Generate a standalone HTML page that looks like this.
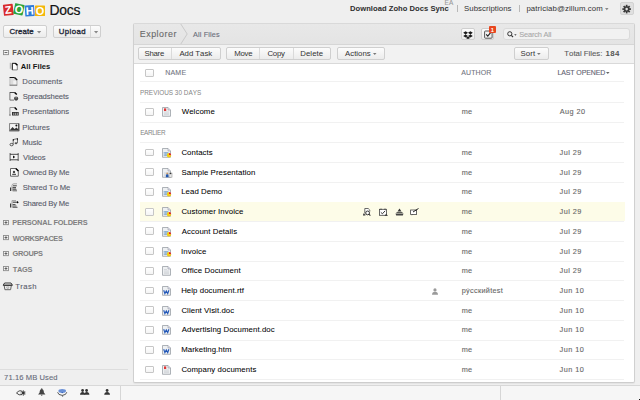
<!DOCTYPE html>
<html><head><meta charset="utf-8"><style>
html,body{margin:0;padding:0}
body{width:640px;height:400px;position:relative;overflow:hidden;background:#efefef;font-family:"Liberation Sans", sans-serif}
.t{position:absolute;white-space:nowrap;font-kerning:none;-webkit-text-stroke:0.1px currentColor}
.b{-webkit-text-stroke:0}
svg{overflow:visible}
</style></head><body>
<svg style="position:absolute;left:0px;top:0px" width="48" height="20" viewBox="0 0 48 20"><g transform="translate(8.3 9.8) rotate(-6)"><rect x="-4.9" y="-5.6" width="9.8" height="11.2" rx="0.6" fill="#d92b2b"/><text x="0" y="3.96" font-family="Liberation Sans" font-weight="bold" font-size="11" fill="#fff" text-anchor="middle">Z</text></g><g transform="translate(18.9 9.3) rotate(12)"><rect x="-4.8" y="-5.4" width="9.6" height="10.8" rx="0.6" fill="#2ba33a"/><text x="0" y="3.96" font-family="Liberation Sans" font-weight="bold" font-size="11" fill="#fff" text-anchor="middle">O</text></g><g transform="translate(29.7 10.8) rotate(-4)"><rect x="-4.7" y="-5.5" width="9.4" height="11.0" rx="0.6" fill="#2f7bd8"/><text x="0" y="3.96" font-family="Liberation Sans" font-weight="bold" font-size="11" fill="#fff" text-anchor="middle">H</text></g><g transform="translate(40.0 10.7) rotate(0)"><rect x="-5.0" y="-5.3" width="10.0" height="10.6" rx="0.6" fill="#f4b70c"/><text x="0" y="3.96" font-family="Liberation Sans" font-weight="bold" font-size="11" fill="#fff" text-anchor="middle">O</text></g></svg><div class="t" style="left:49.56px;top:4.00px;font-size:13.9px;line-height:13.9px;color:#111;font-weight:normal;letter-spacing:-0.242px;-webkit-text-stroke:0.2px #111">Docs</div><div style="position:absolute;left:3.3px;top:25.2px;width:43.5px;height:12.6px;box-sizing:border-box;border:1px solid #cfcfcf;border-radius:2px;background:linear-gradient(#fcfcfc,#ececec);"></div><div class="t" style="left:9.40px;top:28.00px;font-size:7.8px;line-height:7.8px;color:#262b3a;font-weight:normal;letter-spacing:0.166px;-webkit-text-stroke:0.35px #262b3a">Create</div><svg style="position:absolute;left:37px;top:31px" width="4.2" height="2.4" viewBox="0 0 4.2 2.4"><path d="M0 0H4.2L2.1 2.4Z" fill="#888"/></svg><div style="position:absolute;left:52.5px;top:25.2px;width:48.8px;height:12.6px;box-sizing:border-box;border:1px solid #cfcfcf;border-radius:2px;background:linear-gradient(#fcfcfc,#ececec);"></div><div style="position:absolute;left:90px;top:26.2px;width:1px;height:10.6px;background:#d8d8d8"></div><div class="t" style="left:58.80px;top:28.00px;font-size:7.8px;line-height:7.8px;color:#262b3a;font-weight:normal;letter-spacing:0.397px;-webkit-text-stroke:0.35px #262b3a">Upload</div><svg style="position:absolute;left:93.7px;top:31px" width="4.2" height="2.4" viewBox="0 0 4.2 2.4"><path d="M0 0H4.2L2.1 2.4Z" fill="#888"/></svg><div class="t b" style="left:350.09px;top:5.00px;font-size:7.6px;line-height:7.6px;color:#2e2e2e;font-weight:bold;letter-spacing:0.030px;">Download Zoho Docs Sync</div><div class="t" style="left:444.48px;top:0.00px;font-size:6.4px;line-height:6.4px;color:#999;font-weight:normal;letter-spacing:0.200px;">EA</div><div style="position:absolute;left:457px;top:5px;width:1px;height:7px;background:#b8b8b8"></div><div class="t" style="left:464.05px;top:5.00px;font-size:7.8px;line-height:7.8px;color:#333;font-weight:normal;letter-spacing:0.055px;-webkit-text-stroke:0">Subscriptions</div><div style="position:absolute;left:519px;top:5px;width:1px;height:7px;background:#b8b8b8"></div><div class="t" style="left:526.40px;top:5.00px;font-size:7.8px;line-height:7.8px;color:#333;font-weight:normal;letter-spacing:0.115px;-webkit-text-stroke:0">patriciab@zillum.com</div><svg style="position:absolute;left:605.2px;top:7.6px" width="3.6" height="2.2" viewBox="0 0 3.6 2.2"><path d="M0 0H3.6L1.8 2.2Z" fill="#888"/></svg><div style="position:absolute;left:619.8px;top:2.2px;width:14.2px;height:13.1px;box-sizing:border-box;border:1px solid #d2d2d2;border-radius:2px;background:#e0e0e0"></div><svg style="position:absolute;left:622px;top:4.9px" width="9.3" height="8.2" viewBox="0 0 9.3 8.2"><g transform="translate(4.65 4.1)" fill="#3a3a3a"><rect x="-0.85" y="-4.3" width="1.7" height="2.6" transform="rotate(0)"/><rect x="-0.85" y="-4.3" width="1.7" height="2.6" transform="rotate(45)"/><rect x="-0.85" y="-4.3" width="1.7" height="2.6" transform="rotate(90)"/><rect x="-0.85" y="-4.3" width="1.7" height="2.6" transform="rotate(135)"/><rect x="-0.85" y="-4.3" width="1.7" height="2.6" transform="rotate(180)"/><rect x="-0.85" y="-4.3" width="1.7" height="2.6" transform="rotate(225)"/><rect x="-0.85" y="-4.3" width="1.7" height="2.6" transform="rotate(270)"/><rect x="-0.85" y="-4.3" width="1.7" height="2.6" transform="rotate(315)"/><circle r="2.8"/><circle r="1.3" fill="#e0e0e0"/></g></svg><svg style="position:absolute;left:3.3px;top:49.8px" width="6" height="6" viewBox="0 0 6 6"><rect x="0.45" y="0.45" width="5" height="4.2" fill="#f6f6f6" stroke="#8c8c8c" stroke-width="0.9"/><path d="M1.5 2.55H4.4" stroke="#555" stroke-width="0.9"/></svg><div class="t b" style="left:12.30px;top:49.00px;font-size:7.4px;line-height:7.4px;color:#555;font-weight:bold;letter-spacing:-0.045px;">FAVORITES</div><svg style="position:absolute;left:9px;top:62px" width="10" height="9" viewBox="0 0 10 9"><path d="M1.3 0.8V6.8" stroke="#aaa" stroke-width="1"/><path d="M3.2 1.3H6.5L8.3 3.1V7.9H3.2Z" fill="#fff" stroke="#666" stroke-width="0.8"/><path d="M3.2 1.4H6.4M3.4 1.3V7.8" stroke="#222" stroke-width="0.9"/><path d="M6.3 1.2L8.4 3.3" stroke="#000" stroke-width="1.5"/></svg><div class="t b" style="left:20.81px;top:63.00px;font-size:7.6px;line-height:7.6px;color:#151515;font-weight:bold;letter-spacing:0.045px;">All Files</div><svg style="position:absolute;left:9px;top:77px" width="10" height="9" viewBox="0 0 10 9"><path d="M0.6 0.4H5.6L8.1 2.9V8.6H0.6Z" fill="#dcdcdc"/><rect x="4.3" y="3.6" width="3.2" height="4" fill="#f2f2f2"/><path d="M0.9 0.5V8.5" stroke="#bbb" stroke-width="0.8"/><path d="M8 3V8.6" stroke="#aaa" stroke-width="0.8"/><path d="M0.6 8.2H8.1" stroke="#666" stroke-width="0.9"/><path d="M0.6 0.5H5.6" stroke="#111" stroke-width="1"/><path d="M5.5 0.4L8.2 3.1" stroke="#111" stroke-width="1.4"/></svg><div class="t" style="left:22.37px;top:78.00px;font-size:7.7px;line-height:7.7px;color:#575a69;font-weight:normal;letter-spacing:0.146px;">Documents</div><svg style="position:absolute;left:9px;top:92px" width="10" height="9" viewBox="0 0 10 9"><path d="M0.9 0.4V8.1H5" stroke="#666" stroke-width="0.9" fill="none"/><path d="M0.8 0.5H5.8" stroke="#333" stroke-width="0.9"/><path d="M5.6 0.4L7.8 2.6" stroke="#000" stroke-width="1.4"/><circle cx="7.1" cy="6.6" r="2.1" fill="#444"/><path d="M7.1 6.6V4.5" stroke="#ddd" stroke-width="0.6"/></svg><div class="t" style="left:22.65px;top:93.00px;font-size:7.7px;line-height:7.7px;color:#575a69;font-weight:normal;letter-spacing:-0.108px;">Spreadsheets</div><svg style="position:absolute;left:9px;top:107px" width="10" height="9" viewBox="0 0 10 9"><path d="M0.9 8.3V0.5H5.8" fill="none" stroke="#888" stroke-width="0.9"/><path d="M5.6 0.5L7.9 2.8" stroke="#000" stroke-width="1.4"/><rect x="3" y="5" width="6.7" height="3.5" fill="#333"/><path d="M4.8 5.8V8M6.6 5.8V8M8.3 5.8V8" stroke="#ddd" stroke-width="0.7"/><rect x="0.5" y="7.6" width="1" height="1" fill="#333"/></svg><div class="t" style="left:22.37px;top:108.00px;font-size:7.7px;line-height:7.7px;color:#575a69;font-weight:normal;letter-spacing:-0.014px;">Presentations</div><svg style="position:absolute;left:9px;top:122.5px" width="10" height="9" viewBox="0 0 10 9"><rect x="0.6" y="0.6" width="9.2" height="7.4" fill="#f4f4f4" stroke="#777" stroke-width="0.9"/><path d="M9.8 0.6V8" stroke="#333" stroke-width="1"/><path d="M1 7L3.5 4L5.5 6L7.5 4.5L9.4 6.5V7.5H1Z" fill="#333"/><circle cx="7.4" cy="2.4" r="1" fill="#111"/><path d="M0.6 7.6H9.8" stroke="#666" stroke-width="0.8"/></svg><div class="t" style="left:22.37px;top:124.00px;font-size:7.7px;line-height:7.7px;color:#575a69;font-weight:normal;letter-spacing:-0.058px;">Pictures</div><svg style="position:absolute;left:9px;top:138px" width="10" height="9" viewBox="0 0 10 9"><path d="M4.2 6.5V1.6L8.5 0.6V5" stroke="#666" stroke-width="0.9" fill="none"/><ellipse cx="2.6" cy="6.6" rx="1.6" ry="1.2" fill="none" stroke="#444" stroke-width="0.9"/><ellipse cx="7" cy="5.2" rx="1.4" ry="1" fill="#555"/><rect x="3.8" y="1.1" width="1.2" height="1.6" fill="#222"/><rect x="7.9" y="0.2" width="1" height="2" fill="#222"/></svg><div class="t" style="left:22.37px;top:139.00px;font-size:7.7px;line-height:7.7px;color:#575a69;font-weight:normal;letter-spacing:-0.143px;">Music</div><svg style="position:absolute;left:9px;top:153px" width="10" height="9" viewBox="0 0 10 9"><rect x="0.5" y="0" width="9.3" height="8" fill="#f6f6f6"/><path d="M1.1 0V8M9.2 0V8" stroke="#777" stroke-width="1.2"/><path d="M1 1.3H9.3M1 6.8H9.3" stroke="#333" stroke-width="0.9"/><path d="M4 2.6L6.2 4.1L4 5.6Z" fill="#111"/></svg><div class="t" style="left:22.97px;top:154.00px;font-size:7.7px;line-height:7.7px;color:#575a69;font-weight:normal;letter-spacing:-0.186px;">Videos</div><svg style="position:absolute;left:10px;top:168px" width="10" height="9" viewBox="0 0 10 9"><path d="M0.5 0.5H6L8.3 2.8V8.2H0.5Z" fill="#fafafa" stroke="#555" stroke-width="0.9"/><path d="M5.8 0.4L8.4 3" stroke="#000" stroke-width="1.4"/><circle cx="4" cy="4" r="1.2" fill="#444"/><rect x="2.2" y="5.8" width="3.8" height="1.1" fill="#444"/></svg><div class="t" style="left:22.64px;top:169.00px;font-size:7.7px;line-height:7.7px;color:#575a69;font-weight:normal;letter-spacing:-0.135px;">Owned By Me</div><svg style="position:absolute;left:10px;top:183px" width="10" height="9" viewBox="0 0 10 9"><path d="M0.6 4.5V8" stroke="#333" stroke-width="1.1"/><path d="M2 8V2.5Q2 0.8 4 0.8H7" stroke="#999" stroke-width="0.9" fill="none"/><path d="M3 2.8H6.8" stroke="#444" stroke-width="1"/><path d="M2.6 4.8H6" stroke="#222" stroke-width="1.1"/><path d="M2.6 6.4H6.5M2.6 7.8H7" stroke="#555" stroke-width="0.9"/></svg><div class="t" style="left:22.65px;top:184.00px;font-size:7.7px;line-height:7.7px;color:#575a69;font-weight:normal;letter-spacing:-0.100px;">Shared To Me</div><svg style="position:absolute;left:10px;top:198.5px" width="10" height="9" viewBox="0 0 10 9"><path d="M0.6 4.5V8.5" stroke="#333" stroke-width="1.1"/><path d="M2 8.5V1.6H6" stroke="#999" stroke-width="0.9" fill="none"/><path d="M2.8 3.2H7.5" stroke="#333" stroke-width="1"/><path d="M7 2L8.8 3.2L7 4.4Z" fill="#000"/><path d="M2.6 5.5H5.5M2.6 7H6.5M2.6 8.3H7.5" stroke="#444" stroke-width="0.9"/></svg><div class="t" style="left:22.65px;top:200.00px;font-size:7.7px;line-height:7.7px;color:#575a69;font-weight:normal;letter-spacing:-0.191px;">Shared By Me</div><svg style="position:absolute;left:3.3px;top:219.8px" width="6" height="6" viewBox="0 0 6 6"><rect x="0.45" y="0.45" width="5" height="4.2" fill="#f6f6f6" stroke="#8c8c8c" stroke-width="0.9"/><path d="M1.5 2.55H4.4M2.95 1.2V3.9" stroke="#555" stroke-width="0.9"/></svg><div class="t b" style="left:12.30px;top:219.00px;font-size:7.4px;line-height:7.4px;color:#808080;font-weight:bold;letter-spacing:-0.210px;">PERSONAL FOLDERS</div><svg style="position:absolute;left:3.3px;top:235.20000000000002px" width="6" height="6" viewBox="0 0 6 6"><rect x="0.45" y="0.45" width="5" height="4.2" fill="#f6f6f6" stroke="#8c8c8c" stroke-width="0.9"/><path d="M1.5 2.55H4.4M2.95 1.2V3.9" stroke="#555" stroke-width="0.9"/></svg><div class="t b" style="left:12.79px;top:235.00px;font-size:7.4px;line-height:7.4px;color:#808080;font-weight:bold;letter-spacing:-0.418px;">WORKSPACES</div><svg style="position:absolute;left:3.3px;top:250.60000000000002px" width="6" height="6" viewBox="0 0 6 6"><rect x="0.45" y="0.45" width="5" height="4.2" fill="#f6f6f6" stroke="#8c8c8c" stroke-width="0.9"/><path d="M1.5 2.55H4.4M2.95 1.2V3.9" stroke="#555" stroke-width="0.9"/></svg><div class="t b" style="left:12.50px;top:250.00px;font-size:7.4px;line-height:7.4px;color:#808080;font-weight:bold;letter-spacing:-0.296px;">GROUPS</div><svg style="position:absolute;left:3.3px;top:266.0px" width="6" height="6" viewBox="0 0 6 6"><rect x="0.45" y="0.45" width="5" height="4.2" fill="#f6f6f6" stroke="#8c8c8c" stroke-width="0.9"/><path d="M1.5 2.55H4.4M2.95 1.2V3.9" stroke="#555" stroke-width="0.9"/></svg><div class="t b" style="left:12.72px;top:266.00px;font-size:7.4px;line-height:7.4px;color:#808080;font-weight:bold;letter-spacing:-0.261px;">TAGS</div><svg style="position:absolute;left:3px;top:281.8px" width="10" height="9" viewBox="0 0 10 9"><path d="M1.6 1H8L9.4 3.2H0.2Z" fill="#f6f6f6" stroke="#222" stroke-width="0.9"/><path d="M0.3 3.3H9.3" stroke="#333" stroke-width="1"/><path d="M1.2 3.6L1.9 7.7H7.6L8.3 3.6" fill="none" stroke="#555" stroke-width="0.9"/><path d="M3.5 4.9H6L5.5 6.4H4Z" fill="none" stroke="#999" stroke-width="0.6"/></svg><div class="t" style="left:15.13px;top:283.00px;font-size:7.7px;line-height:7.7px;color:#5a5d6c;font-weight:normal;letter-spacing:0.423px;">Trash</div><div style="position:absolute;left:0px;top:369px;width:128px;height:1px;background:#dddddd"></div><div class="t" style="left:4.11px;top:374.00px;font-size:7.6px;line-height:7.6px;color:#666a78;font-weight:normal;letter-spacing:0.083px;">71.16 MB Used</div><div style="position:absolute;left:0px;top:384.5px;width:640px;height:15.5px;box-sizing:border-box;background:#f6f6f6;border-top:1px solid #d8d8d8"></div><div style="position:absolute;left:120px;top:385.5px;width:1px;height:14.5px;background:#d6d6d6"></div><div style="position:absolute;left:500px;top:385.5px;width:1px;height:14.5px;background:#d6d6d6"></div><div style="position:absolute;left:639px;top:399px;width:1px;height:1px;background:#111"></div><svg style="position:absolute;left:15.8px;top:390px" width="10" height="6" viewBox="0 0 10 6"><path d="M0.5 3Q4 -0.8 6.5 1.8M0.5 3Q3 5.8 6 4.6" stroke="#333" stroke-width="0.9" fill="none"/><circle cx="7.3" cy="3" r="1.4" fill="#333"/><path d="M7.3 0V6M4.5 3H9.7M5.3 1L9.3 5M5.3 5L9.3 1" stroke="#333" stroke-width="0.6"/></svg><svg style="position:absolute;left:37.8px;top:388.2px" width="8" height="8" viewBox="0 0 8 8"><path d="M3.75 0.2V1.2" stroke="#444" stroke-width="0.9"/><path d="M3.75 1Q5.8 1.2 5.9 4.4L7.4 6.6H0.1L1.6 4.4Q1.7 1.2 3.75 1Z" fill="#444"/><path d="M3.75 6.6V7.9" stroke="#444" stroke-width="0.9"/></svg><svg style="position:absolute;left:57px;top:389px" width="11" height="8" viewBox="0 0 11 8"><ellipse cx="5.2" cy="2" rx="3.8" ry="1.9" fill="#6a90d6"/><path d="M0.6 3.2Q1 6 5.2 6.4Q9.4 6 9.8 3.2" stroke="#333" stroke-width="0.8" fill="none"/><circle cx="5.2" cy="3.6" r="0.6" fill="#2a55b0"/><circle cx="5.6" cy="7" r="0.6" fill="#333"/></svg><svg style="position:absolute;left:79.5px;top:389.2px" width="10" height="6" viewBox="0 0 10 6"><circle cx="2.6" cy="1.5" r="1.4" fill="#333"/><circle cx="6.6" cy="1.5" r="1.4" fill="#333"/><path d="M0 5.8Q0.3 3 2.6 3Q4.9 3 5.2 5.8Z" fill="#333"/><path d="M4.3 5.8Q4.5 3 6.8 3Q9.1 3 9.4 5.8Z" fill="#333"/></svg><svg style="position:absolute;left:104.3px;top:389.2px" width="6.2" height="6" viewBox="0 0 6.2 6"><circle cx="3.1" cy="1.5" r="1.4" fill="#333"/><path d="M0.2 5.8Q0.5 3 3.1 3Q5.7 3 6 5.8Z" fill="#333"/></svg><div style="position:absolute;left:133px;top:23px;width:502px;height:360.3px;box-sizing:border-box;border:1px solid #d0d0d0;border-top-color:#d9d9d9;border-bottom-color:#cdcdcd;border-radius:2px;box-shadow:0 1px 1px rgba(0,0,0,0.05);background:#fff"></div><div style="position:absolute;left:134px;top:24px;width:500px;height:21px;box-sizing:border-box;background:linear-gradient(#e8e8e8,#e4e4e4);border-bottom:1px solid #d6d6d6"></div><div style="position:absolute;left:134px;top:45px;width:500px;height:19px;box-sizing:border-box;background:#f2f2f2;border-bottom:1px solid #d9d9d9"></div><div class="t" style="left:139.77px;top:30.00px;font-size:8.9px;line-height:8.9px;color:#686868;font-weight:normal;letter-spacing:0.520px;">Explorer</div><svg style="position:absolute;left:179.5px;top:24px" width="8" height="20" viewBox="0 0 8 20"><path d="M0.8 0L7.2 10L0.8 20" fill="none" stroke="#cacaca" stroke-width="1"/></svg><div class="t" style="left:192.99px;top:31.00px;font-size:7.3px;line-height:7.3px;color:#6a6d7a;font-weight:normal;letter-spacing:0.141px;">All Files</div><div style="position:absolute;left:460.6px;top:28px;width:14.8px;height:12px;box-sizing:border-box;border:1px solid #cfcfcf;border-radius:2px;background:linear-gradient(#fcfcfc,#ececec);"></div><svg style="position:absolute;left:463.4px;top:30.6px" width="10" height="8" viewBox="0 0 10 8"><path d="M2.6 0.2L5 1.8L2.6 3.4L0.2 1.8Z M7.4 0.2L9.8 1.8L7.4 3.4L5 1.8Z M2.6 3.4L5 5L2.6 6.6L0.2 5Z M7.4 3.4L9.8 5L7.4 6.6L5 5Z M5 5.6L7.2 7L5 8.1L2.8 7Z" fill="#1a1a1a"/></svg><div style="position:absolute;left:481px;top:28px;width:12.5px;height:12px;box-sizing:border-box;border:1px solid #cfcfcf;border-radius:2px;background:linear-gradient(#fcfcfc,#ececec);"></div><svg style="position:absolute;left:483.5px;top:30.4px" width="9" height="9" viewBox="0 0 9 9"><rect x="0.6" y="1" width="7.5" height="7.2" rx="0.8" fill="#f2f2f2" stroke="#444" stroke-width="0.9"/><path d="M2.2 4.3L3.8 6.2L7 2.2" stroke="#222" stroke-width="1.1" fill="none"/></svg><div style="position:absolute;left:488.7px;top:25.8px;width:7.3px;height:6.8px;background:#e8461f;border-radius:1px"></div><div class="t b" style="left:490.83px;top:28.00px;font-size:5.8px;line-height:5.8px;color:#fff;font-weight:bold;letter-spacing:0.000px;">1</div><div style="position:absolute;left:503.3px;top:28px;width:126.7px;height:12.2px;box-sizing:border-box;border:1px solid #dadada;border-radius:3px;background:#f1f1f1"></div><svg style="position:absolute;left:506.7px;top:30.6px" width="10" height="7" viewBox="0 0 10 7"><circle cx="2.8" cy="2.8" r="2.1" fill="none" stroke="#333" stroke-width="1"/><path d="M4.3 4.3L6 6" stroke="#333" stroke-width="1.2"/><path d="M7.2 3.3H9.6L8.4 4.7Z" fill="#444"/></svg><div class="t" style="left:519.26px;top:31.00px;font-size:7.4px;line-height:7.4px;color:#a8a8a8;font-weight:normal;letter-spacing:-0.166px;">Search All</div><div style="position:absolute;left:137.5px;top:47px;width:83.5px;height:13px;box-sizing:border-box;border:1px solid #cfcfcf;border-radius:2px;background:linear-gradient(#fcfcfc,#ececec);"></div><div style="position:absolute;left:171px;top:48px;width:1px;height:11px;background:#dadada"></div><div class="t" style="left:144.40px;top:50.00px;font-size:7.8px;line-height:7.8px;color:#333;font-weight:normal;letter-spacing:-0.216px;-webkit-text-stroke:0">Share</div><div class="t" style="left:179.38px;top:50.00px;font-size:7.8px;line-height:7.8px;color:#333;font-weight:normal;letter-spacing:-0.013px;-webkit-text-stroke:0">Add Task</div><div style="position:absolute;left:226px;top:47px;width:105px;height:13px;box-sizing:border-box;border:1px solid #cfcfcf;border-radius:2px;background:linear-gradient(#fcfcfc,#ececec);"></div><div style="position:absolute;left:259px;top:48px;width:1px;height:11px;background:#dadada"></div><div style="position:absolute;left:293px;top:48px;width:1px;height:11px;background:#dadada"></div><div class="t" style="left:234.16px;top:50.00px;font-size:7.8px;line-height:7.8px;color:#333;font-weight:normal;letter-spacing:-0.196px;-webkit-text-stroke:0">Move</div><div class="t" style="left:267.40px;top:50.00px;font-size:7.8px;line-height:7.8px;color:#333;font-weight:normal;letter-spacing:-0.199px;-webkit-text-stroke:0">Copy</div><div class="t" style="left:300.26px;top:50.00px;font-size:7.8px;line-height:7.8px;color:#333;font-weight:normal;letter-spacing:0.068px;-webkit-text-stroke:0">Delete</div><div style="position:absolute;left:337px;top:47px;width:48px;height:13px;box-sizing:border-box;border:1px solid #cfcfcf;border-radius:2px;background:linear-gradient(#fcfcfc,#ececec);"></div><div class="t" style="left:344.98px;top:50.00px;font-size:7.8px;line-height:7.8px;color:#333;font-weight:normal;letter-spacing:0.036px;-webkit-text-stroke:0">Actions</div><svg style="position:absolute;left:372.8px;top:53.3px" width="3.5" height="2.1" viewBox="0 0 3.5 2.1"><path d="M0 0H3.5L1.75 2.1Z" fill="#777"/></svg><div style="position:absolute;left:513.5px;top:47px;width:35.5px;height:13px;box-sizing:border-box;border:1px solid #cfcfcf;border-radius:2px;background:linear-gradient(#fcfcfc,#ececec);"></div><div class="t" style="left:520.45px;top:50.00px;font-size:7.8px;line-height:7.8px;color:#333;font-weight:normal;letter-spacing:0.102px;-webkit-text-stroke:0">Sort</div><svg style="position:absolute;left:536.8px;top:53.3px" width="3.7" height="2.1" viewBox="0 0 3.7 2.1"><path d="M0 0H3.7L1.85 2.1Z" fill="#777"/></svg><div class="t" style="left:564.32px;top:50.00px;font-size:7.8px;line-height:7.8px;color:#5a5a5a;font-weight:normal;letter-spacing:-0.001px;">Total Files:</div><div class="t b" style="left:605.51px;top:50.00px;font-size:7.8px;line-height:7.8px;color:#555;font-weight:bold;letter-spacing:0.385px;">184</div><div style="position:absolute;left:145px;top:68.8px;width:8.6px;height:7.8px;box-sizing:border-box;border:1px solid #c6c6c6;border-radius:1px;background:linear-gradient(#fff,#f4f4f4)"></div><div class="t" style="left:165.13px;top:69.00px;font-size:7.0px;line-height:7.0px;color:#737682;font-weight:normal;letter-spacing:0.250px;">NAME</div><div class="t" style="left:461.29px;top:69.00px;font-size:7.0px;line-height:7.0px;color:#737682;font-weight:normal;letter-spacing:0.097px;">AUTHOR</div><div class="t" style="left:557.43px;top:69.00px;font-size:7.0px;line-height:7.0px;color:#5f6270;font-weight:normal;letter-spacing:-0.110px;">LAST OPENED</div><svg style="position:absolute;left:606.2px;top:72.4px" width="3.6" height="2.1" viewBox="0 0 3.6 2.1"><path d="M0 0H3.6L1.8 2.1Z" fill="#666"/></svg><div style="position:absolute;left:139.5px;top:81px;width:484.5px;height:1px;background:#f1f1f1"></div><div class="t" style="left:139.97px;top:90.00px;font-size:6.4px;line-height:6.4px;color:#858585;font-weight:normal;letter-spacing:0.009px;-webkit-text-stroke:0">PREVIOUS 30 DAYS</div><div style="position:absolute;left:139.5px;top:102.2px;width:484.5px;height:1px;background:#f1f1f1"></div><div style="position:absolute;left:139.5px;top:122.2px;width:484.5px;height:1px;background:#f1f1f1"></div><div class="t" style="left:140.17px;top:130.00px;font-size:6.4px;line-height:6.4px;color:#858585;font-weight:normal;letter-spacing:-0.311px;-webkit-text-stroke:0">EARLIER</div><div style="position:absolute;left:139.5px;top:142.4px;width:484.5px;height:1px;background:#f1f1f1"></div><div style="position:absolute;left:145px;top:108.0px;width:8.6px;height:7.8px;box-sizing:border-box;border:1px solid #c6c6c6;border-radius:1px;background:linear-gradient(#fff,#f4f4f4)"></div><svg style="position:absolute;left:162px;top:107.39999999999999px" width="10.5" height="10" viewBox="0 0 10.5 10"><path d="M0.5 0.5H6L8.5 3V9.3H0.5Z" fill="#eef0f2" stroke="#9aa0a6" stroke-width="0.8"/><path d="M6 0.5V3H8.5" fill="#dde" stroke="#9aa0a6" stroke-width="0.6"/><path d="M2 5H7M2 6.3H7M2 7.6H7" stroke="#c4c8cc" stroke-width="0.6"/><rect x="2" y="1.4" width="2.2" height="2.6" fill="#e03535"/></svg><div class="t" style="left:181.77px;top:108.00px;font-size:7.8px;line-height:7.8px;color:#000;font-weight:normal;letter-spacing:0.080px;-webkit-text-stroke:0.05px #000">Welcome</div><div class="t" style="left:461.72px;top:108.00px;font-size:7.3px;line-height:7.3px;color:#666;font-weight:normal;letter-spacing:0.300px;">me</div><div class="t" style="left:559.69px;top:108.00px;font-size:7.3px;line-height:7.3px;color:#666;font-weight:normal;letter-spacing:0.450px;">Aug 20</div><div style="position:absolute;left:145px;top:148.6px;width:8.6px;height:7.8px;box-sizing:border-box;border:1px solid #c6c6c6;border-radius:1px;background:linear-gradient(#fff,#f4f4f4)"></div><svg style="position:absolute;left:162px;top:148.0px" width="10.5" height="10" viewBox="0 0 10.5 10"><path d="M0.5 0.5H6L8.5 3V9.3H0.5Z" fill="#eef0f2" stroke="#9aa0a6" stroke-width="0.8"/><path d="M6 0.5V3H8.5" fill="#dde" stroke="#9aa0a6" stroke-width="0.6"/><path d="M1.5 4.6H6.5M1.5 6H6.5M1.5 7.4H6.5M3.2 4V8M5 4V8" stroke="#6a9ac8" stroke-width="0.6"/><path d="M7 7.3L7 5.1A2.2 2.2 0 0 1 9.2 7.3Z" fill="#e52020"/><path d="M7 7.3H9.2A2.2 2.2 0 1 1 7 5.1Z" fill="#f2cf12"/></svg><div class="t" style="left:181.40px;top:149.00px;font-size:7.8px;line-height:7.8px;color:#000;font-weight:normal;letter-spacing:0.080px;-webkit-text-stroke:0.05px #000">Contacts</div><div class="t" style="left:461.72px;top:149.00px;font-size:7.3px;line-height:7.3px;color:#666;font-weight:normal;letter-spacing:0.300px;">me</div><div class="t" style="left:559.59px;top:149.00px;font-size:7.3px;line-height:7.3px;color:#666;font-weight:normal;letter-spacing:0.450px;">Jul 29</div><div style="position:absolute;left:139.5px;top:162.12px;width:484.5px;height:1px;background:#f1f1f1"></div><div style="position:absolute;left:145px;top:168.32px;width:8.6px;height:7.8px;box-sizing:border-box;border:1px solid #c6c6c6;border-radius:1px;background:linear-gradient(#fff,#f4f4f4)"></div><svg style="position:absolute;left:162px;top:167.72px" width="10.5" height="10" viewBox="0 0 10.5 10"><path d="M0.5 0.5H6L8.5 3V9.3H0.5Z" fill="#eef0f2" stroke="#9aa0a6" stroke-width="0.8"/><path d="M6 0.5V3H8.5" fill="#dde" stroke="#9aa0a6" stroke-width="0.6"/><path d="M2 5H7M2 6.3H7M2 7.6H7" stroke="#c4c8cc" stroke-width="0.6"/><rect x="7" y="5" width="3" height="4.2" fill="#e8e8e8" stroke="#888" stroke-width="0.5"/><circle cx="8.5" cy="5.5" r="0.8" fill="#333"/><path d="M3.8 9.2Q3.8 6 5.2 6Q6.6 6 6.6 9.2Z" fill="#1f56b0"/><circle cx="5.2" cy="5.4" r="0.9" fill="#c96"/></svg><div class="t" style="left:181.45px;top:169.00px;font-size:7.8px;line-height:7.8px;color:#000;font-weight:normal;letter-spacing:0.080px;-webkit-text-stroke:0.05px #000">Sample Presentation</div><div class="t" style="left:461.72px;top:169.00px;font-size:7.3px;line-height:7.3px;color:#666;font-weight:normal;letter-spacing:0.300px;">me</div><div class="t" style="left:559.59px;top:169.00px;font-size:7.3px;line-height:7.3px;color:#666;font-weight:normal;letter-spacing:0.450px;">Jul 29</div><div style="position:absolute;left:139.5px;top:181.84px;width:484.5px;height:1px;background:#f1f1f1"></div><div style="position:absolute;left:145px;top:188.04px;width:8.6px;height:7.8px;box-sizing:border-box;border:1px solid #c6c6c6;border-radius:1px;background:linear-gradient(#fff,#f4f4f4)"></div><svg style="position:absolute;left:162px;top:187.44px" width="10.5" height="10" viewBox="0 0 10.5 10"><path d="M0.5 0.5H6L8.5 3V9.3H0.5Z" fill="#eef0f2" stroke="#9aa0a6" stroke-width="0.8"/><path d="M6 0.5V3H8.5" fill="#dde" stroke="#9aa0a6" stroke-width="0.6"/><path d="M1.5 4.6H6.5M1.5 6H6.5M1.5 7.4H6.5M3.2 4V8M5 4V8" stroke="#6a9ac8" stroke-width="0.6"/><path d="M7 7.3L7 5.1A2.2 2.2 0 0 1 9.2 7.3Z" fill="#e52020"/><path d="M7 7.3H9.2A2.2 2.2 0 1 1 7 5.1Z" fill="#f2cf12"/></svg><div class="t" style="left:181.16px;top:188.00px;font-size:7.8px;line-height:7.8px;color:#000;font-weight:normal;letter-spacing:0.080px;-webkit-text-stroke:0.05px #000">Lead Demo</div><div class="t" style="left:461.72px;top:188.00px;font-size:7.3px;line-height:7.3px;color:#666;font-weight:normal;letter-spacing:0.300px;">me</div><div class="t" style="left:559.59px;top:188.00px;font-size:7.3px;line-height:7.3px;color:#666;font-weight:normal;letter-spacing:0.450px;">Jul 29</div><div style="position:absolute;left:139.5px;top:201.56px;width:484.5px;height:1px;background:#f1f1f1"></div><div style="position:absolute;left:140px;top:202.06px;width:485px;height:19.22px;background:#fdfce8"></div><svg style="position:absolute;left:363.4px;top:208.06px" width="8" height="8" viewBox="0 0 8 8"><path d="M1.8 5V0.5H5.2L6.8 2.1V3.5" fill="#fff" stroke="#444" stroke-width="0.8"/><circle cx="4.6" cy="4.9" r="1.9" fill="#fff" stroke="#333" stroke-width="1"/><path d="M5.9 6.2L7.4 7.6" stroke="#333" stroke-width="1.1"/><rect x="0" y="5.6" width="2.4" height="2" fill="#555"/></svg><svg style="position:absolute;left:378.5px;top:207.56px" width="9" height="8.5" viewBox="0 0 9 8.5"><rect x="0.5" y="1.3" width="7" height="6" fill="#fff" stroke="#444" stroke-width="0.8"/><path d="M2 0.5V2M6 0.5V2" stroke="#333" stroke-width="0.8"/><path d="M1.8 4.3L3.4 5.8L6.2 2.8" stroke="#222" stroke-width="0.9" fill="none"/><path d="M5.5 8L7.2 5.5L8.9 8Z" fill="#444"/></svg><svg style="position:absolute;left:394.5px;top:207.76px" width="9" height="8" viewBox="0 0 9 8"><path d="M4.5 0.5L6.5 3.5H2.5Z" fill="#333"/><path d="M0.5 5.5H8.5L7.8 7.5H1.2Z" fill="#444"/><path d="M1.5 4.5H7.5" stroke="#333" stroke-width="0.8"/></svg><svg style="position:absolute;left:409.5px;top:207.86px" width="9" height="8" viewBox="0 0 9 8"><rect x="0.6" y="2" width="6" height="4.4" fill="#fff" stroke="#444" stroke-width="0.8"/><path d="M2 6.4L1.5 7.6L3.2 6.4" fill="#444"/><path d="M3 4L8.5 0.5" stroke="#222" stroke-width="1"/></svg><div style="position:absolute;left:145px;top:207.76px;width:8.6px;height:7.8px;box-sizing:border-box;border:1px solid #c6c6c6;border-radius:1px;background:linear-gradient(#fff,#f4f4f4)"></div><svg style="position:absolute;left:162px;top:207.16px" width="10.5" height="10" viewBox="0 0 10.5 10"><path d="M0.5 0.5H6L8.5 3V9.3H0.5Z" fill="#eef0f2" stroke="#9aa0a6" stroke-width="0.8"/><path d="M6 0.5V3H8.5" fill="#dde" stroke="#9aa0a6" stroke-width="0.6"/><path d="M1.5 4.6H6.5M1.5 6H6.5M1.5 7.4H6.5M3.2 4V8M5 4V8" stroke="#6a9ac8" stroke-width="0.6"/><path d="M7 7.3L7 5.1A2.2 2.2 0 0 1 9.2 7.3Z" fill="#e52020"/><path d="M7 7.3H9.2A2.2 2.2 0 1 1 7 5.1Z" fill="#f2cf12"/></svg><div class="t" style="left:181.40px;top:208.00px;font-size:7.8px;line-height:7.8px;color:#000;font-weight:normal;letter-spacing:0.080px;-webkit-text-stroke:0.05px #000">Customer Invoice</div><div class="t" style="left:461.72px;top:208.00px;font-size:7.3px;line-height:7.3px;color:#666;font-weight:normal;letter-spacing:0.300px;">me</div><div class="t" style="left:559.59px;top:208.00px;font-size:7.3px;line-height:7.3px;color:#666;font-weight:normal;letter-spacing:0.450px;">Jul 29</div><div style="position:absolute;left:139.5px;top:221.28px;width:484.5px;height:1px;background:#f1f1f1"></div><div style="position:absolute;left:145px;top:227.48px;width:8.6px;height:7.8px;box-sizing:border-box;border:1px solid #c6c6c6;border-radius:1px;background:linear-gradient(#fff,#f4f4f4)"></div><svg style="position:absolute;left:162px;top:226.88px" width="10.5" height="10" viewBox="0 0 10.5 10"><path d="M0.5 0.5H6L8.5 3V9.3H0.5Z" fill="#eef0f2" stroke="#9aa0a6" stroke-width="0.8"/><path d="M6 0.5V3H8.5" fill="#dde" stroke="#9aa0a6" stroke-width="0.6"/><path d="M1.5 4.6H6.5M1.5 6H6.5M1.5 7.4H6.5M3.2 4V8M5 4V8" stroke="#6a9ac8" stroke-width="0.6"/><path d="M7 7.3L7 5.1A2.2 2.2 0 0 1 9.2 7.3Z" fill="#e52020"/><path d="M7 7.3H9.2A2.2 2.2 0 1 1 7 5.1Z" fill="#f2cf12"/></svg><div class="t" style="left:181.78px;top:228.00px;font-size:7.8px;line-height:7.8px;color:#000;font-weight:normal;letter-spacing:0.080px;-webkit-text-stroke:0.05px #000">Account Details</div><div class="t" style="left:461.72px;top:228.00px;font-size:7.3px;line-height:7.3px;color:#666;font-weight:normal;letter-spacing:0.300px;">me</div><div class="t" style="left:559.59px;top:228.00px;font-size:7.3px;line-height:7.3px;color:#666;font-weight:normal;letter-spacing:0.450px;">Jul 29</div><div style="position:absolute;left:139.5px;top:241.0px;width:484.5px;height:1px;background:#f1f1f1"></div><div style="position:absolute;left:145px;top:247.2px;width:8.6px;height:7.8px;box-sizing:border-box;border:1px solid #c6c6c6;border-radius:1px;background:linear-gradient(#fff,#f4f4f4)"></div><svg style="position:absolute;left:162px;top:246.6px" width="10.5" height="10" viewBox="0 0 10.5 10"><path d="M0.5 0.5H6L8.5 3V9.3H0.5Z" fill="#eef0f2" stroke="#9aa0a6" stroke-width="0.8"/><path d="M6 0.5V3H8.5" fill="#dde" stroke="#9aa0a6" stroke-width="0.6"/><path d="M1.5 4.6H6.5M1.5 6H6.5M1.5 7.4H6.5M3.2 4V8M5 4V8" stroke="#6a9ac8" stroke-width="0.6"/><path d="M7 7.3L7 5.1A2.2 2.2 0 0 1 9.2 7.3Z" fill="#e52020"/><path d="M7 7.3H9.2A2.2 2.2 0 1 1 7 5.1Z" fill="#f2cf12"/></svg><div class="t" style="left:181.08px;top:248.00px;font-size:7.8px;line-height:7.8px;color:#000;font-weight:normal;letter-spacing:0.080px;-webkit-text-stroke:0.05px #000">Invoice</div><div class="t" style="left:461.72px;top:248.00px;font-size:7.3px;line-height:7.3px;color:#666;font-weight:normal;letter-spacing:0.300px;">me</div><div class="t" style="left:559.59px;top:248.00px;font-size:7.3px;line-height:7.3px;color:#666;font-weight:normal;letter-spacing:0.450px;">Jul 29</div><div style="position:absolute;left:139.5px;top:260.72px;width:484.5px;height:1px;background:#f1f1f1"></div><div style="position:absolute;left:145px;top:266.92px;width:8.6px;height:7.8px;box-sizing:border-box;border:1px solid #c6c6c6;border-radius:1px;background:linear-gradient(#fff,#f4f4f4)"></div><svg style="position:absolute;left:162px;top:266.32000000000005px" width="10.5" height="10" viewBox="0 0 10.5 10"><path d="M0.5 0.5H6L8.5 3V9.3H0.5Z" fill="#eef0f2" stroke="#9aa0a6" stroke-width="0.8"/><path d="M6 0.5V3H8.5" fill="#dde" stroke="#9aa0a6" stroke-width="0.6"/><path d="M2 5H7M2 6.3H7M2 7.6H7" stroke="#c4c8cc" stroke-width="0.6"/><path d="M2 3.5H5" stroke="#c4c8cc" stroke-width="0.6"/></svg><div class="t" style="left:181.43px;top:267.00px;font-size:7.8px;line-height:7.8px;color:#000;font-weight:normal;letter-spacing:0.080px;-webkit-text-stroke:0.05px #000">Office Document</div><div class="t" style="left:461.72px;top:267.00px;font-size:7.3px;line-height:7.3px;color:#666;font-weight:normal;letter-spacing:0.300px;">me</div><div class="t" style="left:559.59px;top:267.00px;font-size:7.3px;line-height:7.3px;color:#666;font-weight:normal;letter-spacing:0.450px;">Jul 29</div><div style="position:absolute;left:139.5px;top:280.44000000000005px;width:484.5px;height:1px;background:#f1f1f1"></div><svg style="position:absolute;left:432.2px;top:288.44px" width="6" height="7" viewBox="0 0 6 7"><circle cx="3" cy="1.9" r="1.6" fill="#9a9a9a"/><path d="M0 6.8Q0 3.7 3 3.7Q6 3.7 6 6.8Z" fill="#9a9a9a"/></svg><div style="position:absolute;left:145px;top:286.64px;width:8.6px;height:7.8px;box-sizing:border-box;border:1px solid #c6c6c6;border-radius:1px;background:linear-gradient(#fff,#f4f4f4)"></div><svg style="position:absolute;left:162px;top:286.04px" width="10.5" height="10" viewBox="0 0 10.5 10"><path d="M0.5 0.5H6L8.5 3V9.3H0.5Z" fill="#eef0f2" stroke="#9aa0a6" stroke-width="0.8"/><path d="M6 0.5V3H8.5" fill="#dde" stroke="#9aa0a6" stroke-width="0.6"/><path d="M1.7 4.2L2.9 7.6L4.3 5L5.7 7.6L6.9 4.2" stroke="#2358b8" stroke-width="1.15" fill="none"/></svg><div class="t" style="left:181.16px;top:287.00px;font-size:7.8px;line-height:7.8px;color:#000;font-weight:normal;letter-spacing:0.080px;-webkit-text-stroke:0.05px #000">Help document.rtf</div><div class="t" style="left:461.73px;top:287.00px;font-size:7.3px;line-height:7.3px;color:#666;font-weight:normal;letter-spacing:0.300px;">рýсскийtest</div><div class="t" style="left:559.59px;top:287.00px;font-size:7.3px;line-height:7.3px;color:#666;font-weight:normal;letter-spacing:0.450px;">Jun 10</div><div style="position:absolute;left:139.5px;top:300.15999999999997px;width:484.5px;height:1px;background:#f1f1f1"></div><div style="position:absolute;left:145px;top:306.35999999999996px;width:8.6px;height:7.8px;box-sizing:border-box;border:1px solid #c6c6c6;border-radius:1px;background:linear-gradient(#fff,#f4f4f4)"></div><svg style="position:absolute;left:162px;top:305.76px" width="10.5" height="10" viewBox="0 0 10.5 10"><path d="M0.5 0.5H6L8.5 3V9.3H0.5Z" fill="#eef0f2" stroke="#9aa0a6" stroke-width="0.8"/><path d="M6 0.5V3H8.5" fill="#dde" stroke="#9aa0a6" stroke-width="0.6"/><path d="M1.7 4.2L2.9 7.6L4.3 5L5.7 7.6L6.9 4.2" stroke="#2358b8" stroke-width="1.15" fill="none"/></svg><div class="t" style="left:181.40px;top:307.00px;font-size:7.8px;line-height:7.8px;color:#000;font-weight:normal;letter-spacing:0.080px;-webkit-text-stroke:0.05px #000">Client Visit.doc</div><div class="t" style="left:461.72px;top:307.00px;font-size:7.3px;line-height:7.3px;color:#666;font-weight:normal;letter-spacing:0.300px;">me</div><div class="t" style="left:559.59px;top:307.00px;font-size:7.3px;line-height:7.3px;color:#666;font-weight:normal;letter-spacing:0.450px;">Jun 10</div><div style="position:absolute;left:139.5px;top:319.88px;width:484.5px;height:1px;background:#f1f1f1"></div><div style="position:absolute;left:145px;top:326.08px;width:8.6px;height:7.8px;box-sizing:border-box;border:1px solid #c6c6c6;border-radius:1px;background:linear-gradient(#fff,#f4f4f4)"></div><svg style="position:absolute;left:162px;top:325.48px" width="10.5" height="10" viewBox="0 0 10.5 10"><path d="M0.5 0.5H6L8.5 3V9.3H0.5Z" fill="#eef0f2" stroke="#9aa0a6" stroke-width="0.8"/><path d="M6 0.5V3H8.5" fill="#dde" stroke="#9aa0a6" stroke-width="0.6"/><path d="M1.7 4.2L2.9 7.6L4.3 5L5.7 7.6L6.9 4.2" stroke="#2358b8" stroke-width="1.15" fill="none"/></svg><div class="t" style="left:181.78px;top:326.00px;font-size:7.8px;line-height:7.8px;color:#000;font-weight:normal;letter-spacing:0.080px;-webkit-text-stroke:0.05px #000">Advertising Document.doc</div><div class="t" style="left:461.72px;top:326.00px;font-size:7.3px;line-height:7.3px;color:#666;font-weight:normal;letter-spacing:0.300px;">me</div><div class="t" style="left:559.59px;top:326.00px;font-size:7.3px;line-height:7.3px;color:#666;font-weight:normal;letter-spacing:0.450px;">Jun 10</div><div style="position:absolute;left:139.5px;top:339.6px;width:484.5px;height:1px;background:#f1f1f1"></div><div style="position:absolute;left:145px;top:345.8px;width:8.6px;height:7.8px;box-sizing:border-box;border:1px solid #c6c6c6;border-radius:1px;background:linear-gradient(#fff,#f4f4f4)"></div><svg style="position:absolute;left:162px;top:345.20000000000005px" width="10.5" height="10" viewBox="0 0 10.5 10"><path d="M0.5 0.5H6L8.5 3V9.3H0.5Z" fill="#eef0f2" stroke="#9aa0a6" stroke-width="0.8"/><path d="M6 0.5V3H8.5" fill="#dde" stroke="#9aa0a6" stroke-width="0.6"/><path d="M1.7 4.2L2.9 7.6L4.3 5L5.7 7.6L6.9 4.2" stroke="#2358b8" stroke-width="1.15" fill="none"/></svg><div class="t" style="left:181.16px;top:346.00px;font-size:7.8px;line-height:7.8px;color:#000;font-weight:normal;letter-spacing:0.080px;-webkit-text-stroke:0.05px #000">Marketing.htm</div><div class="t" style="left:461.72px;top:346.00px;font-size:7.3px;line-height:7.3px;color:#666;font-weight:normal;letter-spacing:0.300px;">me</div><div class="t" style="left:559.59px;top:346.00px;font-size:7.3px;line-height:7.3px;color:#666;font-weight:normal;letter-spacing:0.450px;">Jun 10</div><div style="position:absolute;left:139.5px;top:359.32000000000005px;width:484.5px;height:1px;background:#f1f1f1"></div><div style="position:absolute;left:145px;top:365.52px;width:8.6px;height:7.8px;box-sizing:border-box;border:1px solid #c6c6c6;border-radius:1px;background:linear-gradient(#fff,#f4f4f4)"></div><svg style="position:absolute;left:162px;top:364.92px" width="10.5" height="10" viewBox="0 0 10.5 10"><path d="M0.5 0.5H6L8.5 3V9.3H0.5Z" fill="#eef0f2" stroke="#9aa0a6" stroke-width="0.8"/><path d="M6 0.5V3H8.5" fill="#dde" stroke="#9aa0a6" stroke-width="0.6"/><path d="M2 5H7M2 6.3H7M2 7.6H7" stroke="#c4c8cc" stroke-width="0.6"/><rect x="2" y="1.4" width="2.2" height="2.6" fill="#e03535"/></svg><div class="t" style="left:181.40px;top:366.00px;font-size:7.8px;line-height:7.8px;color:#000;font-weight:normal;letter-spacing:0.080px;-webkit-text-stroke:0.05px #000">Company documents</div><div class="t" style="left:461.72px;top:366.00px;font-size:7.3px;line-height:7.3px;color:#666;font-weight:normal;letter-spacing:0.300px;">me</div><div class="t" style="left:559.59px;top:366.00px;font-size:7.3px;line-height:7.3px;color:#666;font-weight:normal;letter-spacing:0.450px;">Jun 10</div><div style="position:absolute;left:139.5px;top:379.03999999999996px;width:484.5px;height:1px;background:#f1f1f1"></div>
</body></html>
